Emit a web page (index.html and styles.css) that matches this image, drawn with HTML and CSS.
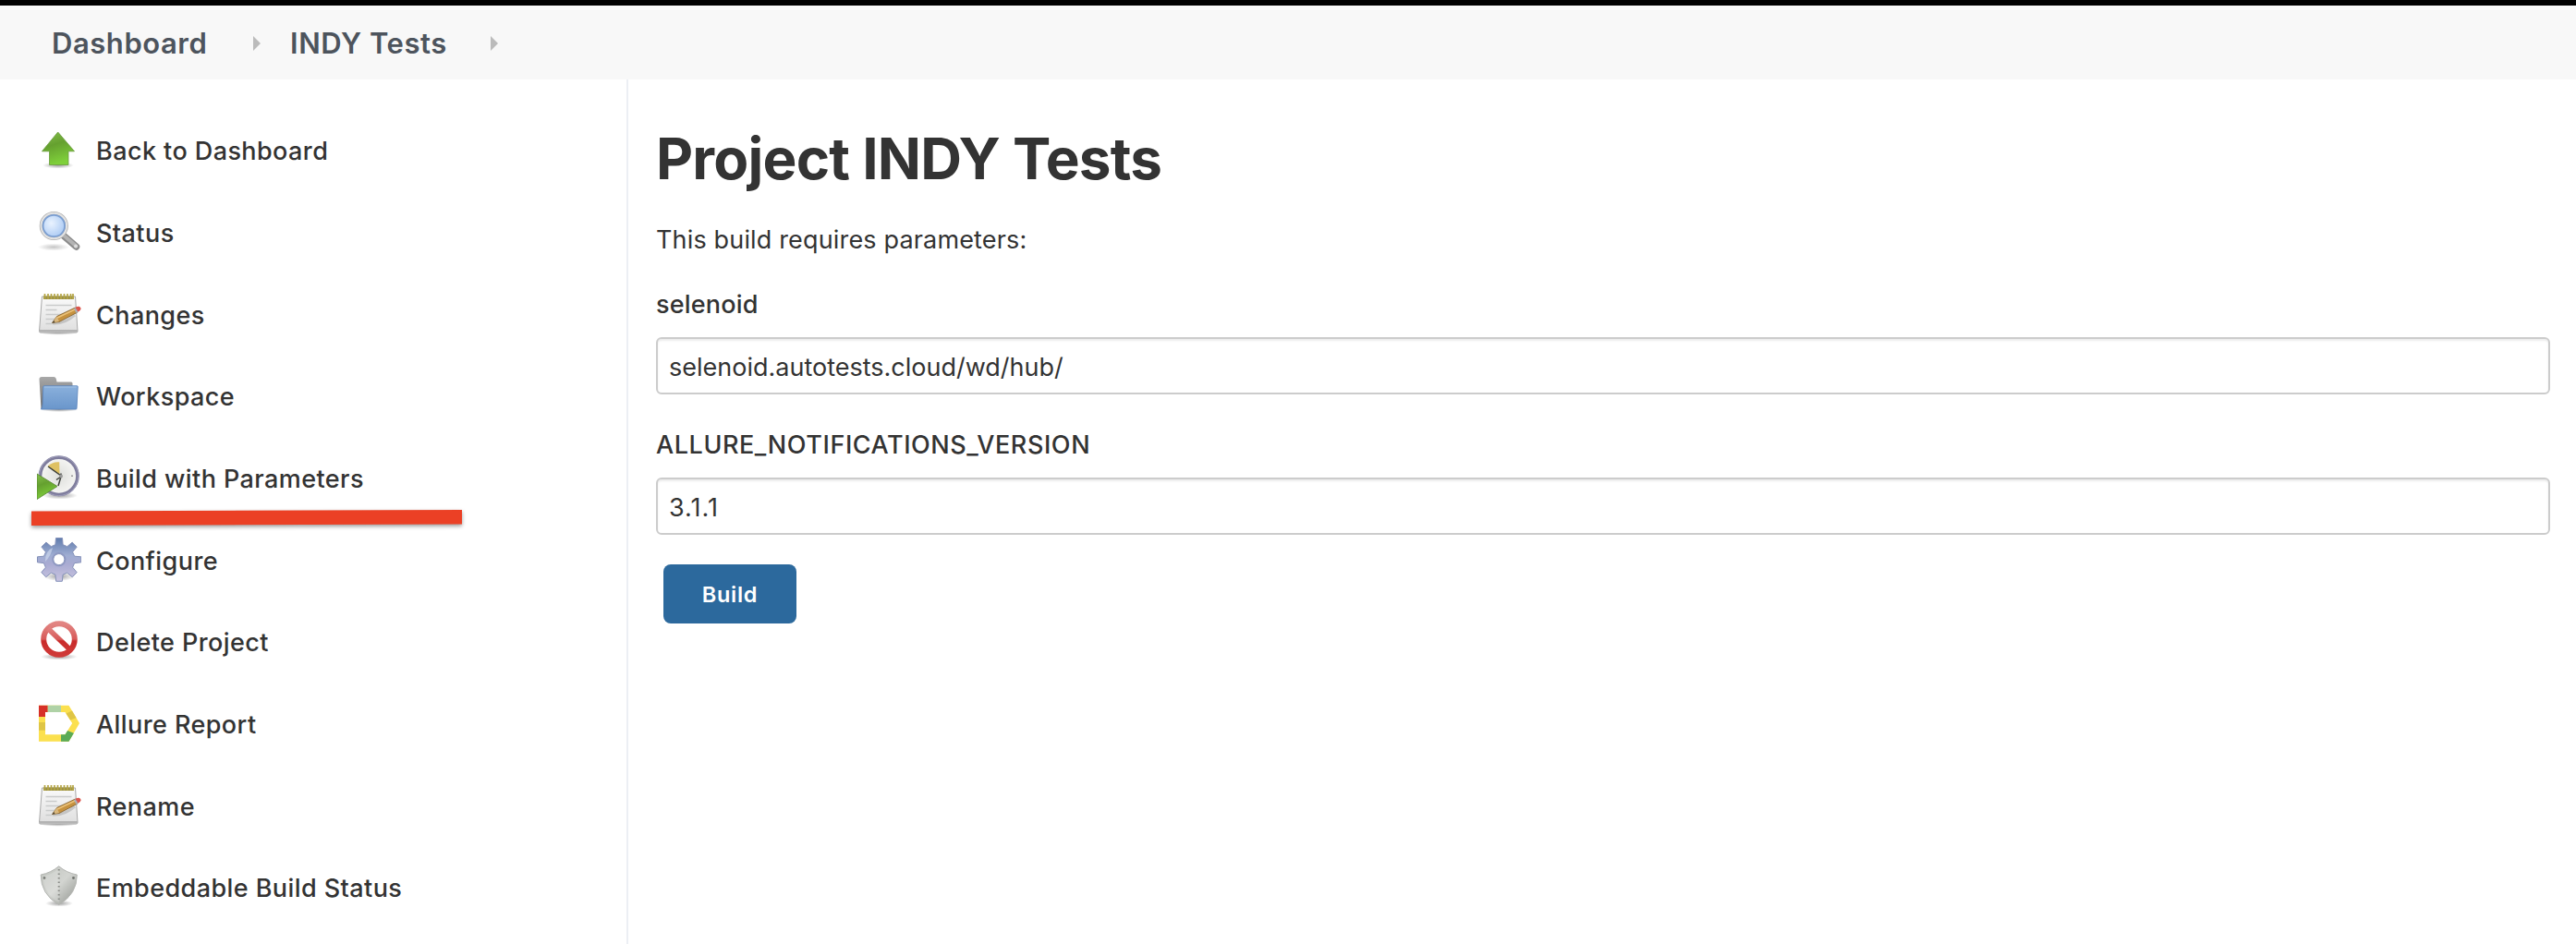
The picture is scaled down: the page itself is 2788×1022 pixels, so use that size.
FILE: index.html
```html
<!DOCTYPE html>
<html lang="en">
<head>
<meta charset="utf-8">
<title>INDY Tests</title>
<link rel="stylesheet" href="styles.css">
</head>
<body>
<svg class="defs" width="0" height="0" aria-hidden="true">
  <defs>
    <radialGradient id="shade"><stop offset="0" stop-color="#000" stop-opacity=".38"/><stop offset="1" stop-color="#000" stop-opacity="0"/></radialGradient>
    <linearGradient id="green" x1="0" y1="0" x2=".3" y2="1"><stop offset="0" stop-color="#86c04d"/><stop offset=".45" stop-color="#65a02f"/><stop offset="1" stop-color="#7fd03a"/></linearGradient>
    <radialGradient id="lens" cx=".4" cy=".4"><stop offset="0" stop-color="#eaf3ff"/><stop offset="1" stop-color="#b4d0f5"/></radialGradient>
    <linearGradient id="paper" x1="0" y1="0" x2="0" y2="1"><stop offset="0" stop-color="#fafafa"/><stop offset="1" stop-color="#dedede"/></linearGradient>
    <linearGradient id="folder" x1="0" y1="0" x2="0" y2="1"><stop offset="0" stop-color="#8ab0dc"/><stop offset="1" stop-color="#6a96cb"/></linearGradient>
    <linearGradient id="folder-back" x1="0" y1="0" x2="0" y2="1"><stop offset="0" stop-color="#a8a8a8"/><stop offset="1" stop-color="#6c6c6c"/></linearGradient>
    <radialGradient id="face"><stop offset="0" stop-color="#dedfdc"/><stop offset="1" stop-color="#f6f6f4"/></radialGradient>
    <linearGradient id="gear" x1=".5" y1="0" x2=".5" y2="1"><stop offset="0" stop-color="#607cad"/><stop offset=".4" stop-color="#9fadd2"/><stop offset=".6" stop-color="#a9abd2"/><stop offset="1" stop-color="#c9c4e0"/></linearGradient>
    <linearGradient id="stop" x1="0" y1="0" x2="0" y2="1"><stop offset="0" stop-color="#e28583"/><stop offset=".5" stop-color="#d75a59"/><stop offset=".56" stop-color="#c92a2a"/><stop offset="1" stop-color="#cf3a38"/></linearGradient>
    <linearGradient id="shield" x1="0" y1="0" x2="1" y2="1"><stop offset="0" stop-color="#bfc2bd"/><stop offset=".5" stop-color="#d3d5d1"/><stop offset="1" stop-color="#8f928d"/></linearGradient>
    <symbol id="notepad" viewBox="0 0 48 48">
      <ellipse cx="23" cy="44" rx="21" ry="2.8" fill="url(#shade)"/>
      <path d="M5.500 5h36l2.500 37.500q0 1.500-1.500 1.500H4q-1.700 0-1.500-1.500Z" fill="url(#paper)" stroke="#a8a8a8" stroke-width="1"/>
      <path d="M3 41h41v2.600H3Z" fill="#b3b3b3"/>
      <path d="M7 4.500h33v3.500H7Z" fill="#98904a"/>
      <path d="M8.500 2v6M12 2v6M15.500 2v6M19 2v6M22.500 2v6M26 2v6M29.500 2v6M33 2v6M36.500 2v6M39 2v6" stroke="#b5a544" stroke-width="1.700"/>
      <path d="M9.500 14.500h28M9.500 19.500h12M9.500 24.500h23M9.500 29.500h16M9.500 34.500h7" stroke="#c9cbcb" stroke-width="1.500"/>
      <path d="M17 34q12 1 24-9" stroke="#000" stroke-opacity=".15" stroke-width="3" fill="none"/>
      <path d="M16.500 33.500l5-7 20-9.500 2.500 5-20 10.500Z" fill="#c6923f" stroke="#7d5c28" stroke-width=".8"/>
      <path d="M22 28l20-9.500" stroke="#ebc27a" stroke-width="1.700"/>
      <path d="M16.500 33.500l5-7 2.500 5.500Z" fill="#d9b77d"/><path d="M16.300 33.700l2-2.800 1.200 2Z" fill="#4a4032"/>
      <path d="M40 18l2-1 2.500 5-2 1Z" fill="#aab0b8"/>
      <path d="M41.600 16.800q4-2.100 5.500.2t-2.600 4.800Z" fill="#dc554c"/>
    </symbol>
  </defs>
</svg>

<header class="breadcrumbs">
  <a class="crumb">Dashboard</a>
  <svg class="crumb-arrow" viewBox="0 0 8 16"><path d="M0 0l8 8-8 8Z"/></svg>
  <a class="crumb crumb-job">INDY Tests</a>
  <svg class="crumb-arrow" viewBox="0 0 8 16"><path d="M0 0l8 8-8 8Z"/></svg>
</header>

<div class="page">
  <nav class="tasks">
    <a class="task">
      <svg class="icon" viewBox="0 0 48 48"><ellipse cx="23" cy="41" rx="17" ry="3.500" fill="url(#shade)"/><path d="M22.700 5L40.500 25.800H34v14.700H13.500V25.800H5.500Z" fill="url(#green)" stroke="#6a9c3c" stroke-width=".8"/></svg>
      <span>Back to Dashboard</span>
    </a>
    <a class="task">
      <svg class="icon" viewBox="0 0 48 48"><ellipse cx="18" cy="40.500" rx="17" ry="4" fill="url(#shade)" opacity=".6"/><path d="M28 27.500L42.500 40" stroke="#8b8b8b" stroke-width="7.500" stroke-linecap="round"/><path d="M28 27L42.500 39.500" stroke="#b3b3b3" stroke-width="4" stroke-linecap="round"/><circle cx="42" cy="39.500" r="2" fill="#ddd"/><circle cx="18.300" cy="17.500" r="13.800" fill="url(#lens)" stroke="#b2b2b2" stroke-width="3.600"/><circle cx="18.300" cy="17.500" r="13.800" fill="none" stroke="#e3e3e3" stroke-width="2"/><circle cx="18.300" cy="17.500" r="11.700" fill="none" stroke="#7b9fd3" stroke-width="1.800"/></svg>
      <span>Status</span>
    </a>
    <a class="task">
      <svg class="icon"><use href="#notepad"/></svg>
      <span>Changes</span>
    </a>
    <a class="task">
      <svg class="icon" viewBox="0 0 48 48"><ellipse cx="24" cy="39.500" rx="21" ry="2.500" fill="url(#shade)"/><path d="M2.500 6.500q0-2.500 2.500-2.500h13q2.500 0 3 3l.5 2.500h15.500q1.500 0 1.500 1.500v27.500H4.500Z" fill="url(#folder-back)"/><path d="M7.500 13.800h36q.8 0 .7.900L43 38.200q0 .8-1 .8H4.500Q6 37 6.200 33L6.800 14.500q0-.7.700-.7Z" fill="url(#folder)" stroke="#5c86bd" stroke-width=".9"/><path d="M7.800 15h35" stroke="#a5c3e6" stroke-width="1"/></svg>
      <span>Workspace</span>
    </a>
    <a class="task">
      <svg class="icon" viewBox="0 0 48 48"><ellipse cx="25" cy="43.500" rx="19" ry="4" fill="url(#shade)"/><circle cx="23.700" cy="22.300" r="20.200" fill="url(#face)" stroke="#7f7d9d" stroke-width="3.600"/><circle cx="23.700" cy="22.300" r="21.300" fill="none" stroke="#a3a2bd" stroke-width=".9"/><path d="M24.500 21L11.700 11.800Q17 6.500 24.200 7.300Z" fill="#dfc163"/><path d="M12 12l14 10M26 23v-3.500M26 23l-5 3.500M26 23l-3 10" stroke="#3c3f39" stroke-width="1.500" fill="none"/><circle cx="26" cy="22.500" r="2" fill="#999"/><path d="M37 22.300h2" stroke="#999" stroke-width="1.500"/><path d="M0 20L22 33.500 0 47.500Z" fill="url(#green)" stroke="#5c8c35" stroke-width=".9"/></svg>
      <span>Build with Parameters</span>
      <svg class="marker" viewBox="0 0 466 17"><path d="M0 1.500L466 0V15.500L0 17Z"/></svg>
    </a>
    <a class="task">
      <svg class="icon" viewBox="0 0 48 48"><ellipse cx="24" cy="42" rx="17" ry="5" fill="url(#shade)"/>
        <path fill-rule="evenodd" d="M20.500 0.500h7l.6 7.200 4.600 2 5.500-4.600 5 5-4.600 5.500 2 4.600 7.200.6v6l-7.200.8-2 4.600 4.600 5.500-5 5-5.500-4.600-4.600 2-.8 7.200h-6.600l-.8-7.200-4.600-2-5.500 4.600-5-5 4.600-5.500-2-4.600L.5 26.800v-6l7-.6 2-4.600-4.600-5.500 5-5 5.500 4.600 4.500-2ZM23.800 17.600a6 6 0 1 0 .01 0Z" fill="url(#gear)" stroke="#8390b8" stroke-width="1"/><path d="M9 26Q9 14 17 11Q15 20 9 26Z" fill="#d4def0" opacity=".6"/><circle cx="23.800" cy="23.600" r="7" fill="none" stroke="#8e98c2" stroke-width="1.200"/></svg>
      <span>Configure</span>
    </a>
    <a class="task">
      <svg class="icon" viewBox="0 0 48 48"><ellipse cx="24" cy="41" rx="20" ry="3.500" fill="url(#shade)"/><circle cx="24" cy="22" r="16.800" fill="#fff" stroke="url(#stop)" stroke-width="6"/><path d="M10 12.500L14 8.500L38.500 32L34.500 36Z" fill="url(#stop)"/></svg>
      <span>Delete Project</span>
    </a>
    <a class="task">
      <svg class="icon" viewBox="0 0 48 48"><path fill-rule="evenodd" d="M2 4.700H34.500L46 24 34.500 43.700H2ZM9 12V36.300H30.500L38.200 24 30.500 12Z" fill="#fbe04e"/><path d="M2 4.700h9.700V12H9v5H2Z" fill="#d63027"/><path d="M11.700 4.700H26V12H11.700Z" fill="#afd2a6"/><path d="M2 23h7v8.700H2Z" fill="#dfc545"/><path d="M31.500 13.600L38 10.500l4.600 7.800L36 20.600Z" fill="#dfc545"/><path d="M26 43.700V36.300h4.500l2.600-4.300 6.800 2.800-5.400 8.900Z" fill="#5aab56"/></svg>
      <span>Allure Report</span>
    </a>
    <a class="task">
      <svg class="icon"><use href="#notepad"/></svg>
      <span>Rename</span>
    </a>
    <a class="task">
      <svg class="icon" viewBox="0 0 48 48"><ellipse cx="24" cy="42" rx="15" ry="3.500" fill="url(#shade)"/><path d="M23.700 1.800Q15 9 4.200 11Q4 32 23.700 43.500Q43.500 32 43.300 11Q32 9 23.700 1.800Z" fill="url(#shield)" stroke="#b4b6b2" stroke-width="1"/><path d="M23.700 4.500Q16 11 6.500 12.500Q7 31 23.700 41Z" fill="#fff" opacity=".18"/><path d="M23.700 5v36" stroke="#8a8c88" stroke-width="2" stroke-dasharray="1.500 3"/><circle cx="8" cy="14.500" r="1.400" fill="#7c7f7a"/><circle cx="39.500" cy="14.500" r="1.400" fill="#6f726d"/></svg>
      <span>Embeddable Build Status</span>
    </a>
  </nav>

  <main class="content">
    <h1 class="title">Project INDY Tests</h1>
    <p class="intro">This build requires parameters:</p>
    <label class="label" for="selenoid">selenoid</label>
    <input class="field" id="selenoid" value="selenoid.autotests.cloud/wd/hub/">
    <label class="label label-version" for="version">ALLURE_NOTIFICATIONS_VERSION</label>
    <input class="field field-version" id="version" value="3.1.1">
    <button class="build" type="button">Build</button>
  </main>
</div>
</body>
</html>
```
FILE: styles.css
```css
* { box-sizing: border-box; }

body {
  margin: 0;
  height: 1022px;
  display: flex;
  flex-direction: column;
  overflow: hidden;
  background: #fff;
  color: #333;
  font-family: Inter, "Liberation Sans", sans-serif;
  font-size: 27px;
}

.defs { position: absolute; }

.breadcrumbs {
  flex: none;
  display: flex;
  align-items: center;
  height: 86px;
  padding: 1px 0 0 56px;
  border-top: 6px solid #000;
  background: #f8f8f8;
}

.crumb {
  width: 218px;
  color: #4d545d;
  font-size: 31px;
  font-weight: 600;
  letter-spacing: .55px;
  line-height: 40px;
  white-space: nowrap;
}

.crumb-job { width: 217px; margin-left: 32px; }

.crumb-arrow { flex: none; width: 8px; height: 16px; fill: #bbb; }

.page { flex: 1; display: flex; min-height: 0; }

.tasks {
  flex: none;
  width: 680px;
  padding: 31.850px 0 0 40px;
  border-right: 2px solid #eceff4;
}

.task {
  position: relative;
  display: flex;
  align-items: center;
  gap: 16px;
  height: 88.700px;
  font-weight: 500;
  letter-spacing: .42px;
}

.task span { padding-top: 3px; white-space: nowrap; }

.icon { flex: none; width: 48px; height: 48px; }

/* Hand-drawn underline laid over the gap between two tasks */
.marker {
  position: absolute;
  left: -6px;
  top: 79.500px;
  width: 466px;
  height: 17px;
  overflow: visible;
  fill: #eb4025;
  filter: drop-shadow(0 2px 2px rgba(0, 0, 0, .4));
}

.content {
  flex: 1;
  display: flex;
  flex-direction: column;
  align-items: flex-start;
  padding: 50px 28px 0 30px;
}

.title {
  margin: 0;
  font-size: 62px;
  font-weight: 700;
  letter-spacing: -.8px;
  line-height: 72px;
}

.intro { margin: 32px 0 30px; letter-spacing: .16px; line-height: 40px; }

.label { font-weight: 500; letter-spacing: .2px; line-height: 40px; }

.label-version { margin-top: 35px; letter-spacing: .57px; }

.field {
  flex: none;
  width: 100%;
  height: 62px;
  margin: 15px 0 0;
  padding: 2px 12px 0;
  border: 2px solid #ccc;
  border-radius: 6px;
  background: #fff;
  box-shadow: inset 0 2px 2px rgba(0, 0, 0, .075);
  color: #333;
  font: inherit;
}

.field-version { letter-spacing: 1px; }

.build {
  flex: none;
  width: 144px;
  height: 64px;
  margin: 32px 0 0 8px;
  padding: 0;
  border: 0;
  border-radius: 8px;
  background: #2c699d;
  color: #fff;
  font: 600 23.500px Inter, "Liberation Sans", sans-serif;
  letter-spacing: .7px;
}
```
